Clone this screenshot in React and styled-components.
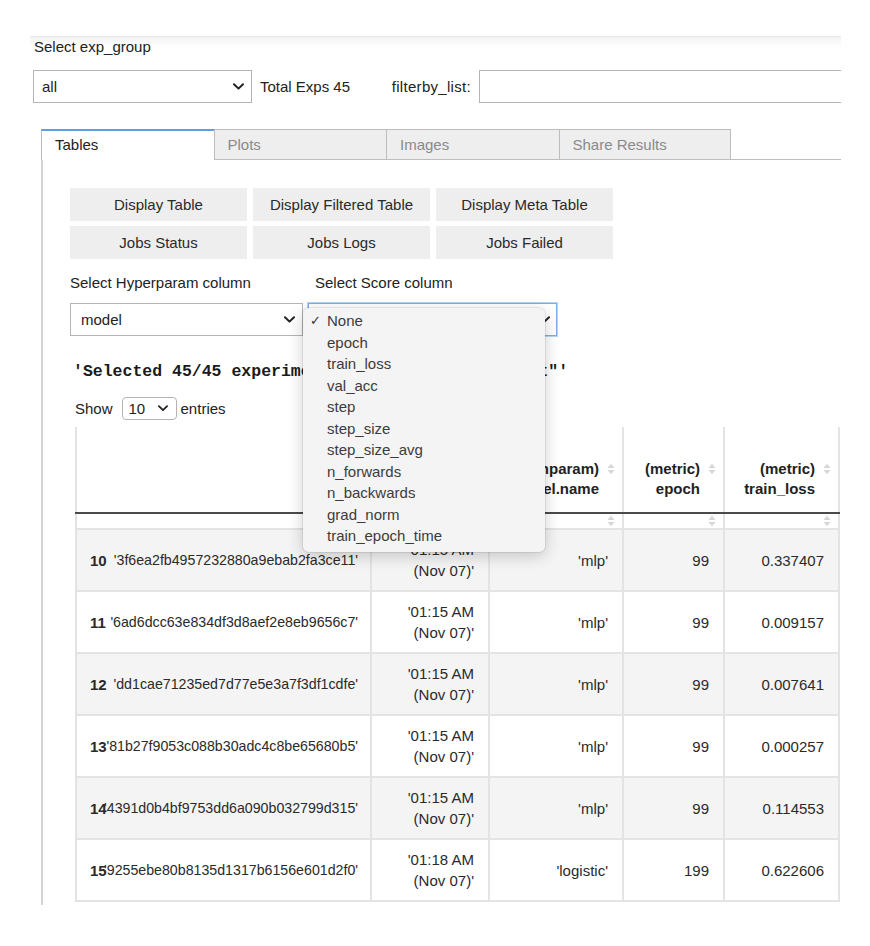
import React from "react"
import styled, { createGlobalStyle } from "styled-components"

const GlobalStyle = createGlobalStyle`
  body {
    margin: 0;
    background: #fff;
    font-family: "Liberation Sans", Arial, sans-serif;
    font-size: 15px;
    color: #222;
  }
`

const Page = styled.div`
  width: 811px;
  margin-left: 30px;
  margin-top: 36px;
  border-top: 1px solid #e8e8e8;
  background: linear-gradient(to bottom, #f3f3f3 0, #fff 11px);
  overflow: hidden;
`

const TopLabel = styled.div`
  line-height: 20px;
  padding-left: 4px;
`

const TopRow = styled.div`
  display: flex;
  align-items: center;
  margin-top: 13px;
  margin-left: 3px;
  height: 33px;
`

const SelectWrap = styled.div`
  position: relative;
  width: ${p => p.$w}px;
`

const SelectBox = styled.div`
  box-sizing: border-box;
  display: flex;
  align-items: center;
  justify-content: space-between;
  width: 100%;
  height: ${p => p.$h || 33}px;
  padding: 0 ${p => p.$pr || 7}px 0 ${p => p.$pl || 8}px;
  background: #fff;
  border: 1px solid ${p => (p.$focus ? "#7aaee6" : "#b4b4b4")};
  border-radius: ${p => p.$r || 0}px;
  ${p => p.$focus && "box-shadow: 0 0 0 1px #b9d5f3;"}
`

const TotalExps = styled.div`
  width: 100px;
  margin-left: 8px;
`

const DescLabel = styled.div`
  box-sizing: border-box;
  width: 119px;
  padding-right: 8px;
  text-align: right;
  letter-spacing: 0.3px;
`

const TextInput = styled.div`
  flex: 1;
  height: 33px;
  box-sizing: border-box;
  border: 1px solid #b4b4b4;
  margin-right: -20px;
`

const TabBar = styled.div`
  display: flex;
  margin: 26px 0 0 11px;
  height: 31px;
`

const Tab = styled.div`
  box-sizing: border-box;
  width: 172.5px;
  height: 31px;
  padding: ${p => (p.$active ? "5px" : "6px")} 0 0 13px;
  border-left: 1px solid #bdbdbd;
  border-top: ${p => (p.$active ? "2px solid #5d9fe6" : "1px solid #bdbdbd")};
  border-bottom: ${p => (p.$active ? "none" : "1px solid #bdbdbd")};
  ${p => p.$last && "border-right: 1px solid #bdbdbd;"}
  background: ${p => (p.$active ? "#fff" : "#eeeeee")};
  color: ${p => (p.$active ? "#222" : "#8a8a8a")};
`

const TabFiller = styled.div`
  flex: 1;
  border-bottom: 1px solid #bdbdbd;
`

const Panel = styled.div`
  margin-left: 11px;
  border-left: 2px solid #d4d4d4;
  padding: 28px 0 3px 27px;
`

const ButtonGrid = styled.div`
  display: grid;
  grid-template-columns: repeat(3, 177px);
  gap: 5px 6px;
`

const Button = styled.div`
  height: 33px;
  display: flex;
  align-items: center;
  justify-content: center;
  background: #eeeeee;
  color: #2a2a2a;
`

const PickerRow = styled.div`
  display: flex;
  gap: 5px;
  margin-top: 14px;
`

const Picker = styled.div`
  display: flex;
  flex-direction: column;
`

const PickerLabel = styled.div`
  line-height: 20px;
  margin-bottom: 10px;
  padding-left: ${p => p.$pl || 0}px;
`

const Menu = styled.div`
  position: absolute;
  top: 5px;
  left: -5px;
  width: 242px;
  padding: 2px 0 5px;
  background: #f4f4f4;
  border-radius: 6px;
  box-shadow: 0 4px 16px rgba(0, 0, 0, 0.2), 0 0 0 1px rgba(0, 0, 0, 0.07);
  z-index: 10;
`

const MenuItem = styled.div`
  display: flex;
  align-items: center;
  height: 21.5px;
  padding-left: 7px;
  color: #3c3c3c;
`

const Check = styled.span`
  width: 17px;
  font-family: "DejaVu Sans", sans-serif;
  font-size: 13px;
  color: #333;
`

const Summary = styled.div`
  margin: 26px 0 0 3px;
  line-height: 20px;
  font-family: "Liberation Mono", "Courier New", monospace;
  font-weight: bold;
  font-size: 16.5px;
  color: #1a1a1a;
  white-space: nowrap;
`

const ShowRow = styled.div`
  display: flex;
  align-items: center;
  margin: 15px 0 0 5px;
  height: 23px;
`

const ShowText = styled.span`
  margin: 0 ${p => p.$mr || 0}px 0 ${p => p.$ml || 0}px;
`

const Table = styled.table`
  margin: 7px 0 0 5px;
  border-collapse: collapse;
  table-layout: fixed;
  width: 763px;
  border-left: 2px solid #e3e3e3;
  border-bottom: 2px solid #e3e3e3;
`

const HeadCell = styled.th`
  height: 72px;
  padding: 0 23px 13px 0;
  vertical-align: bottom;
  text-align: right;
  line-height: 20px;
  font-weight: bold;
  border-right: 2px solid #e3e3e3;
  border-bottom: 2px solid #4a4a4a;
  white-space: nowrap;
`

const HeadLine = styled.div`
  display: flex;
  justify-content: flex-end;
  align-items: center;
`

const FilterCell = styled.td`
  height: 14px;
  padding: 0 7px 0 0;
  text-align: right;
  line-height: 0;
  border-right: 2px solid #e3e3e3;
`

const Row = styled.tr`
  background: ${p => (p.$striped ? "#f4f4f4" : "#fff")};
`

const Cell = styled.td`
  height: 60px;
  padding: 0 14px;
  text-align: right;
  vertical-align: middle;
  line-height: 21px;
  border-top: 2px solid #e3e3e3;
  border-right: 2px solid #e3e3e3;
  color: #2a2a2a;
`

const IdCell = styled(Cell)`
  padding: 0 12px 0 13px;
`

const IdStack = styled.div`
  display: grid;
  white-space: nowrap;
`

const IdIndex = styled.span`
  grid-area: 1 / 1;
  justify-self: start;
  font-weight: bold;
`

const IdHash = styled.span`
  grid-area: 1 / 1;
  justify-self: end;
  font-size: 14.2px;
`

const Chevron = ({ size = 11 }) => (
  <svg width={size} height={size * 0.64} viewBox="0 0 11 7" fill="none">
    <path d="M1 1.2 L5.5 5.6 L10 1.2" stroke="#222" strokeWidth="2" strokeLinecap="round" strokeLinejoin="round" />
  </svg>
)

const SortIcon = ({ hang }) => (
  <svg
    width="8"
    height="12"
    viewBox="0 0 8 12"
    style={hang ? { marginLeft: 8, marginRight: -16, flex: "none" } : undefined}
  >
    <path d="M0.5 5 L4 0.8 L7.5 5 Z" fill="#d6d6d6" />
    <path d="M0.5 7 L4 11.2 L7.5 7 Z" fill="#d6d6d6" />
  </svg>
)

const buttons = [
  "Display Table",
  "Display Filtered Table",
  "Display Meta Table",
  "Jobs Status",
  "Jobs Logs",
  "Jobs Failed",
]

const scoreOptions = [
  "None",
  "epoch",
  "train_loss",
  "val_acc",
  "step",
  "step_size",
  "step_size_avg",
  "n_forwards",
  "n_backwards",
  "grad_norm",
  "train_epoch_time",
]

const columns = [
  { w: 295 },
  { w: 118, top: "(meta)", bottom: "start_time" },
  { w: 134, top: "(hparam)", bottom: "model.name" },
  { w: 101, top: "(metric)", bottom: "epoch" },
  { w: 115, top: "(metric)", bottom: "train_loss" },
]

const rows = [
  { i: 10, hash: "'3f6ea2fb4957232880a9ebab2fa3ce11'", time: "'01:15 AM (Nov 07)'", model: "'mlp'", epoch: 99, loss: "0.337407" },
  { i: 11, hash: "'6ad6dcc63e834df3d8aef2e8eb9656c7'", time: "'01:15 AM (Nov 07)'", model: "'mlp'", epoch: 99, loss: "0.009157" },
  { i: 12, hash: "'dd1cae71235ed7d77e5e3a7f3df1cdfe'", time: "'01:15 AM (Nov 07)'", model: "'mlp'", epoch: 99, loss: "0.007641" },
  { i: 13, hash: "'81b27f9053c088b30adc4c8be65680b5'", time: "'01:15 AM (Nov 07)'", model: "'mlp'", epoch: 99, loss: "0.000257" },
  { i: 14, hash: "'4391d0b4bf9753dd6a090b032799d315'", time: "'01:15 AM (Nov 07)'", model: "'mlp'", epoch: 99, loss: "0.114553" },
  { i: 15, hash: "'9255ebe80b8135d1317b6156e601d2f0'", time: "'01:18 AM (Nov 07)'", model: "'logistic'", epoch: 199, loss: "0.622606" },
]

export default function App() {
  return (
    <>
      <GlobalStyle />
      <Page>
        <TopLabel>Select exp_group</TopLabel>
        <TopRow>
          <SelectWrap $w={219}>
            <SelectBox>
              <span>all</span>
              <Chevron />
            </SelectBox>
          </SelectWrap>
          <TotalExps>Total Exps 45</TotalExps>
          <DescLabel>filterby_list:</DescLabel>
          <TextInput />
        </TopRow>

        <TabBar>
          <Tab $active>Tables</Tab>
          <Tab>Plots</Tab>
          <Tab>Images</Tab>
          <Tab $last>Share Results</Tab>
          <TabFiller />
        </TabBar>

        <Panel>
          <ButtonGrid>
            {buttons.map(b => (
              <Button key={b}>{b}</Button>
            ))}
          </ButtonGrid>

          <PickerRow>
            <Picker>
              <PickerLabel>Select Hyperparam column</PickerLabel>
              <SelectWrap $w={233}>
                <SelectBox $pl={10}>
                  <span>model</span>
                  <Chevron />
                </SelectBox>
              </SelectWrap>
            </Picker>
            <Picker>
              <PickerLabel $pl={7}>Select Score column</PickerLabel>
              <SelectWrap $w={249}>
                <SelectBox $focus $pr={6}>
                  <span>None</span>
                  <Chevron />
                </SelectBox>
                <Menu>
                  {scoreOptions.map((o, idx) => (
                    <MenuItem key={o}>
                      <Check>{idx === 0 ? "✓" : ""}</Check>
                      {o}
                    </MenuItem>
                  ))}
                </Menu>
              </SelectWrap>
            </Picker>
          </PickerRow>

          <Summary>'Selected 45/45 experiments using "filterby_list"'</Summary>

          <ShowRow>
            <ShowText $mr={9}>Show</ShowText>
            <SelectWrap $w={55}>
              <SelectBox $h={23} $r={4} $pl={6} $pr={8}>
                <span>10</span>
                <Chevron size={10} />
              </SelectBox>
            </SelectWrap>
            <ShowText $ml={4}>entries</ShowText>
          </ShowRow>

          <Table>
            <colgroup>
              {columns.map((c, idx) => (
                <col key={idx} style={{ width: c.w }} />
              ))}
            </colgroup>
            <thead>
              <tr>
                {columns.map((c, idx) => (
                  <HeadCell key={idx}>
                    {c.top && (
                      <>
                        <HeadLine>
                          {c.top}
                          <SortIcon hang />
                        </HeadLine>
                        <HeadLine>{c.bottom}</HeadLine>
                      </>
                    )}
                  </HeadCell>
                ))}
              </tr>
              <tr>
                {columns.map((c, idx) => (
                  <FilterCell key={idx}>{c.top && <SortIcon />}</FilterCell>
                ))}
              </tr>
            </thead>
            <tbody>
              {rows.map((r, idx) => (
                <Row key={r.i} $striped={idx % 2 === 0}>
                  <IdCell>
                    <IdStack>
                      <IdIndex>{r.i}</IdIndex>
                      <IdHash>{r.hash}</IdHash>
                    </IdStack>
                  </IdCell>
                  <Cell>{r.time}</Cell>
                  <Cell>{r.model}</Cell>
                  <Cell>{r.epoch}</Cell>
                  <Cell>{r.loss}</Cell>
                </Row>
              ))}
            </tbody>
          </Table>
        </Panel>
      </Page>
    </>
  )
}
